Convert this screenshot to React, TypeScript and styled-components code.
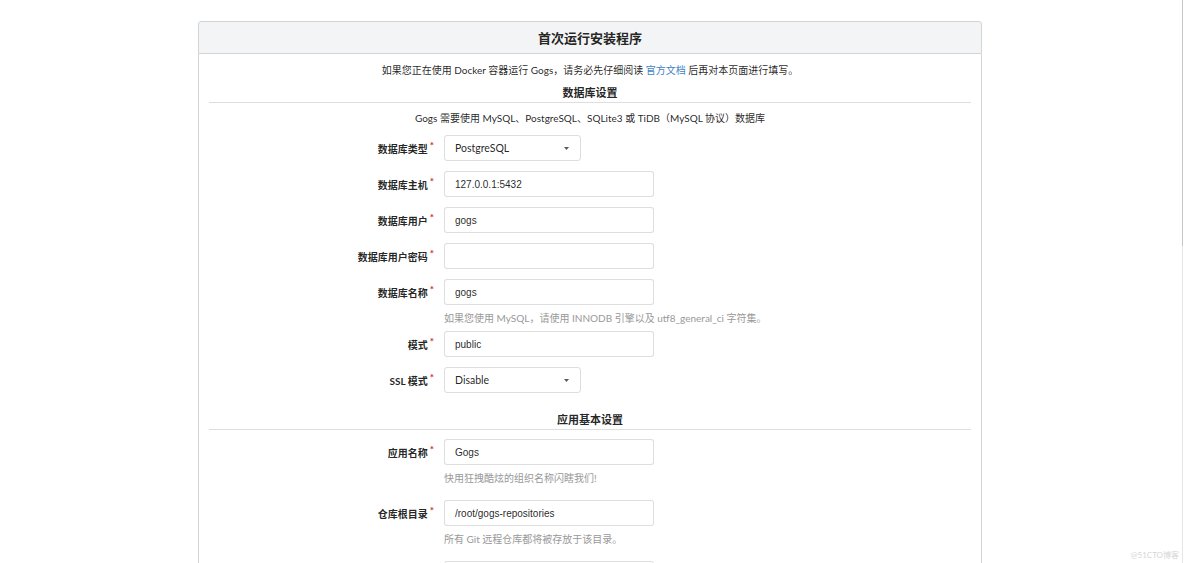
import React from "react";
import styled, { createGlobalStyle } from "styled-components";

// Page-wide reset + fonts
const GlobalStyle = createGlobalStyle`
  html, body {
    margin: 0;
    padding: 0;
    background: #ffffff;
  }
  body {
    font-family: "Lato", "Noto Sans CJK SC", sans-serif;
    color: rgba(0, 0, 0, 0.87);
    font-size: 10px;
  }
  * {
    box-sizing: border-box;
  }
`;

interface FieldProps {
  label?: string;
  help?: string;
  space?: number;
  children: React.ReactNode;
}

/**
 * One inline form field: right aligned label, control and optional help line
 */
const Field = ({ label, help, space = 10, children }: FieldProps) => (
  <FieldWrap $space={space}>
    <Row>
      <Label $required={!!label}>{label}</Label>
      {children}
    </Row>
    {help && <Help>{help}</Help>}
  </FieldWrap>
);

const Select = ({ value }: { value: string }) => (
  <Dropdown>
    <span>{value}</span>
    <svg width="5" height="3" viewBox="0 0 5 3">
      <path d="M0 0 L5 0 L2.5 3 Z" fill="rgba(0,0,0,0.65)" />
    </svg>
  </Dropdown>
);

const App = () => {
  return (
    <Screen>
      <GlobalStyle />
      <Page>
        <Panel>
          {/* Title bar */}
          <PanelHeader>首次运行安装程序</PanelHeader>

          <PanelBody>
            <Notice>
              如果您正在使用 Docker 容器运行 Gogs，请务必先仔细阅读 <Link>官方文档</Link> 后再对本页面进行填写。
            </Notice>

            {/* Database settings */}
            <SectionTitle $top={7}>数据库设置</SectionTitle>
            <Desc>Gogs 需要使用 MySQL、PostgreSQL、SQLite3 或 TiDB（MySQL 协议）数据库</Desc>

            <Field label="数据库类型">
              <Select value="PostgreSQL" />
            </Field>
            <Field label="数据库主机">
              <Input defaultValue="127.0.0.1:5432" />
            </Field>
            <Field label="数据库用户">
              <Input defaultValue="gogs" />
            </Field>
            <Field label="数据库用户密码">
              <Input type="password" defaultValue="" />
            </Field>
            <Field label="数据库名称" help="如果您使用 MySQL，请使用 INNODB 引擎以及 utf8_general_ci 字符集。" space={5}>
              <Input defaultValue="gogs" />
            </Field>
            <Field label="模式">
              <Input defaultValue="public" />
            </Field>
            <Field label="SSL 模式">
              <Select value="Disable" />
            </Field>

            {/* General settings */}
            <SectionTitle $top={9}>应用基本设置</SectionTitle>
            <Spacer />
            <Field label="应用名称" help="快用狂拽酷炫的组织名称闪瞎我们!" space={14}>
              <Input defaultValue="Gogs" />
            </Field>
            <Field label="仓库根目录" help="所有 Git 远程仓库都将被存放于该目录。" space={14}>
              <Input defaultValue="/root/gogs-repositories" />
            </Field>
            {/* Next field, only its top edge is on screen */}
            <Field>
              <Input defaultValue="" />
            </Field>
          </PanelBody>
        </Panel>
      </Page>

      {/* Fake scrollbar */}
      <ScrollTrack>
        <ScrollThumb />
      </ScrollTrack>

      <Watermark>@51CTO博客</Watermark>
    </Screen>
  );
};

const Screen = styled.div`
  position: relative;
  display: flex;
  width: 1184px;
  height: 563px;
  overflow: hidden;
`;

const Page = styled.div`
  flex: 1;
  padding-top: 21px;
`;

const Panel = styled.div`
  width: 784px;
  margin: 0 auto;
`;

const PanelHeader = styled.div`
  height: 33px;
  display: flex;
  align-items: center;
  justify-content: center;
  background: #f3f4f5;
  border: 1px solid #d4d4d5;
  border-radius: 3px 3px 0 0;
  font-size: 13px;
  font-weight: 700;
  color: rgba(0, 0, 0, 0.87);
`;

const PanelBody = styled.div`
  display: flex;
  flex-direction: column;
  padding: 8px 10px 10px;
  border: 1px solid #d4d4d5;
  border-top: none;
  min-height: 600px;
`;

const Notice = styled.div`
  text-align: center;
  line-height: 16px;
`;

const Link = styled.a`
  color: #4183c4;
  cursor: pointer;
`;

const SectionTitle = styled.div<{ $top: number }>`
  margin-top: ${({ $top }) => $top}px;
  padding-bottom: 1px;
  line-height: 16px;
  text-align: center;
  font-size: 11px;
  font-weight: 700;
  border-bottom: 1px solid rgba(34, 36, 38, 0.15);
`;

const Desc = styled.div`
  margin: 7px 0 9px;
  line-height: 16px;
  text-align: center;
`;

const Spacer = styled.div`
  height: 9px;
`;

const FieldWrap = styled.div<{ $space: number }>`
  display: flex;
  flex-direction: column;
  padding-bottom: ${({ $space }) => $space}px;
`;

const Row = styled.div`
  display: flex;
  align-items: center;
`;

const Label = styled.label<{ $required: boolean }>`
  width: 225px;
  margin-right: 10px;
  text-align: right;
  font-weight: 700;
  font-size: 10px;
  color: rgba(0, 0, 0, 0.87);

  &::after {
    content: ${({ $required }) => ($required ? '"*"' : '""')};
    color: #db2828;
    margin-left: 2px;
    position: relative;
    top: -4px;
  }
`;

const Input = styled.input`
  width: 210px;
  height: 26px;
  padding: 0 10px;
  border: 1px solid rgba(34, 36, 38, 0.15);
  border-radius: 3px;
  font-family: "Liberation Sans", Arial, sans-serif;
  font-size: 10px;
  color: rgba(0, 0, 0, 0.87);
  outline: none;
`;

const Dropdown = styled.div`
  width: 137px;
  height: 26px;
  display: flex;
  align-items: center;
  justify-content: space-between;
  padding: 0 11px 0 10px;
  border: 1px solid rgba(34, 36, 38, 0.15);
  border-radius: 3px;
  font-size: 10.5px;
  color: rgba(0, 0, 0, 0.87);
  cursor: pointer;
`;

const Help = styled.div`
  margin: 5px 0 0 235px;
  line-height: 16px;
  color: #999999;
  font-size: 10px;
`;

const ScrollTrack = styled.div`
  width: 4px;
  height: 100%;
  padding-left: 2px;
  background: #ffffff;
`;

const ScrollThumb = styled.div`
  width: 1px;
  height: 246px;
  background: #c6c6c6;
  box-shadow: 0 246px 0 0 #e6e6e6, 0 317px 0 0 #e6e6e6;
`;

const Watermark = styled.div`
  position: absolute;
  right: 5px;
  bottom: 3px;
  font-size: 8px;
  color: #d6d6d6;
`;

export default App;
